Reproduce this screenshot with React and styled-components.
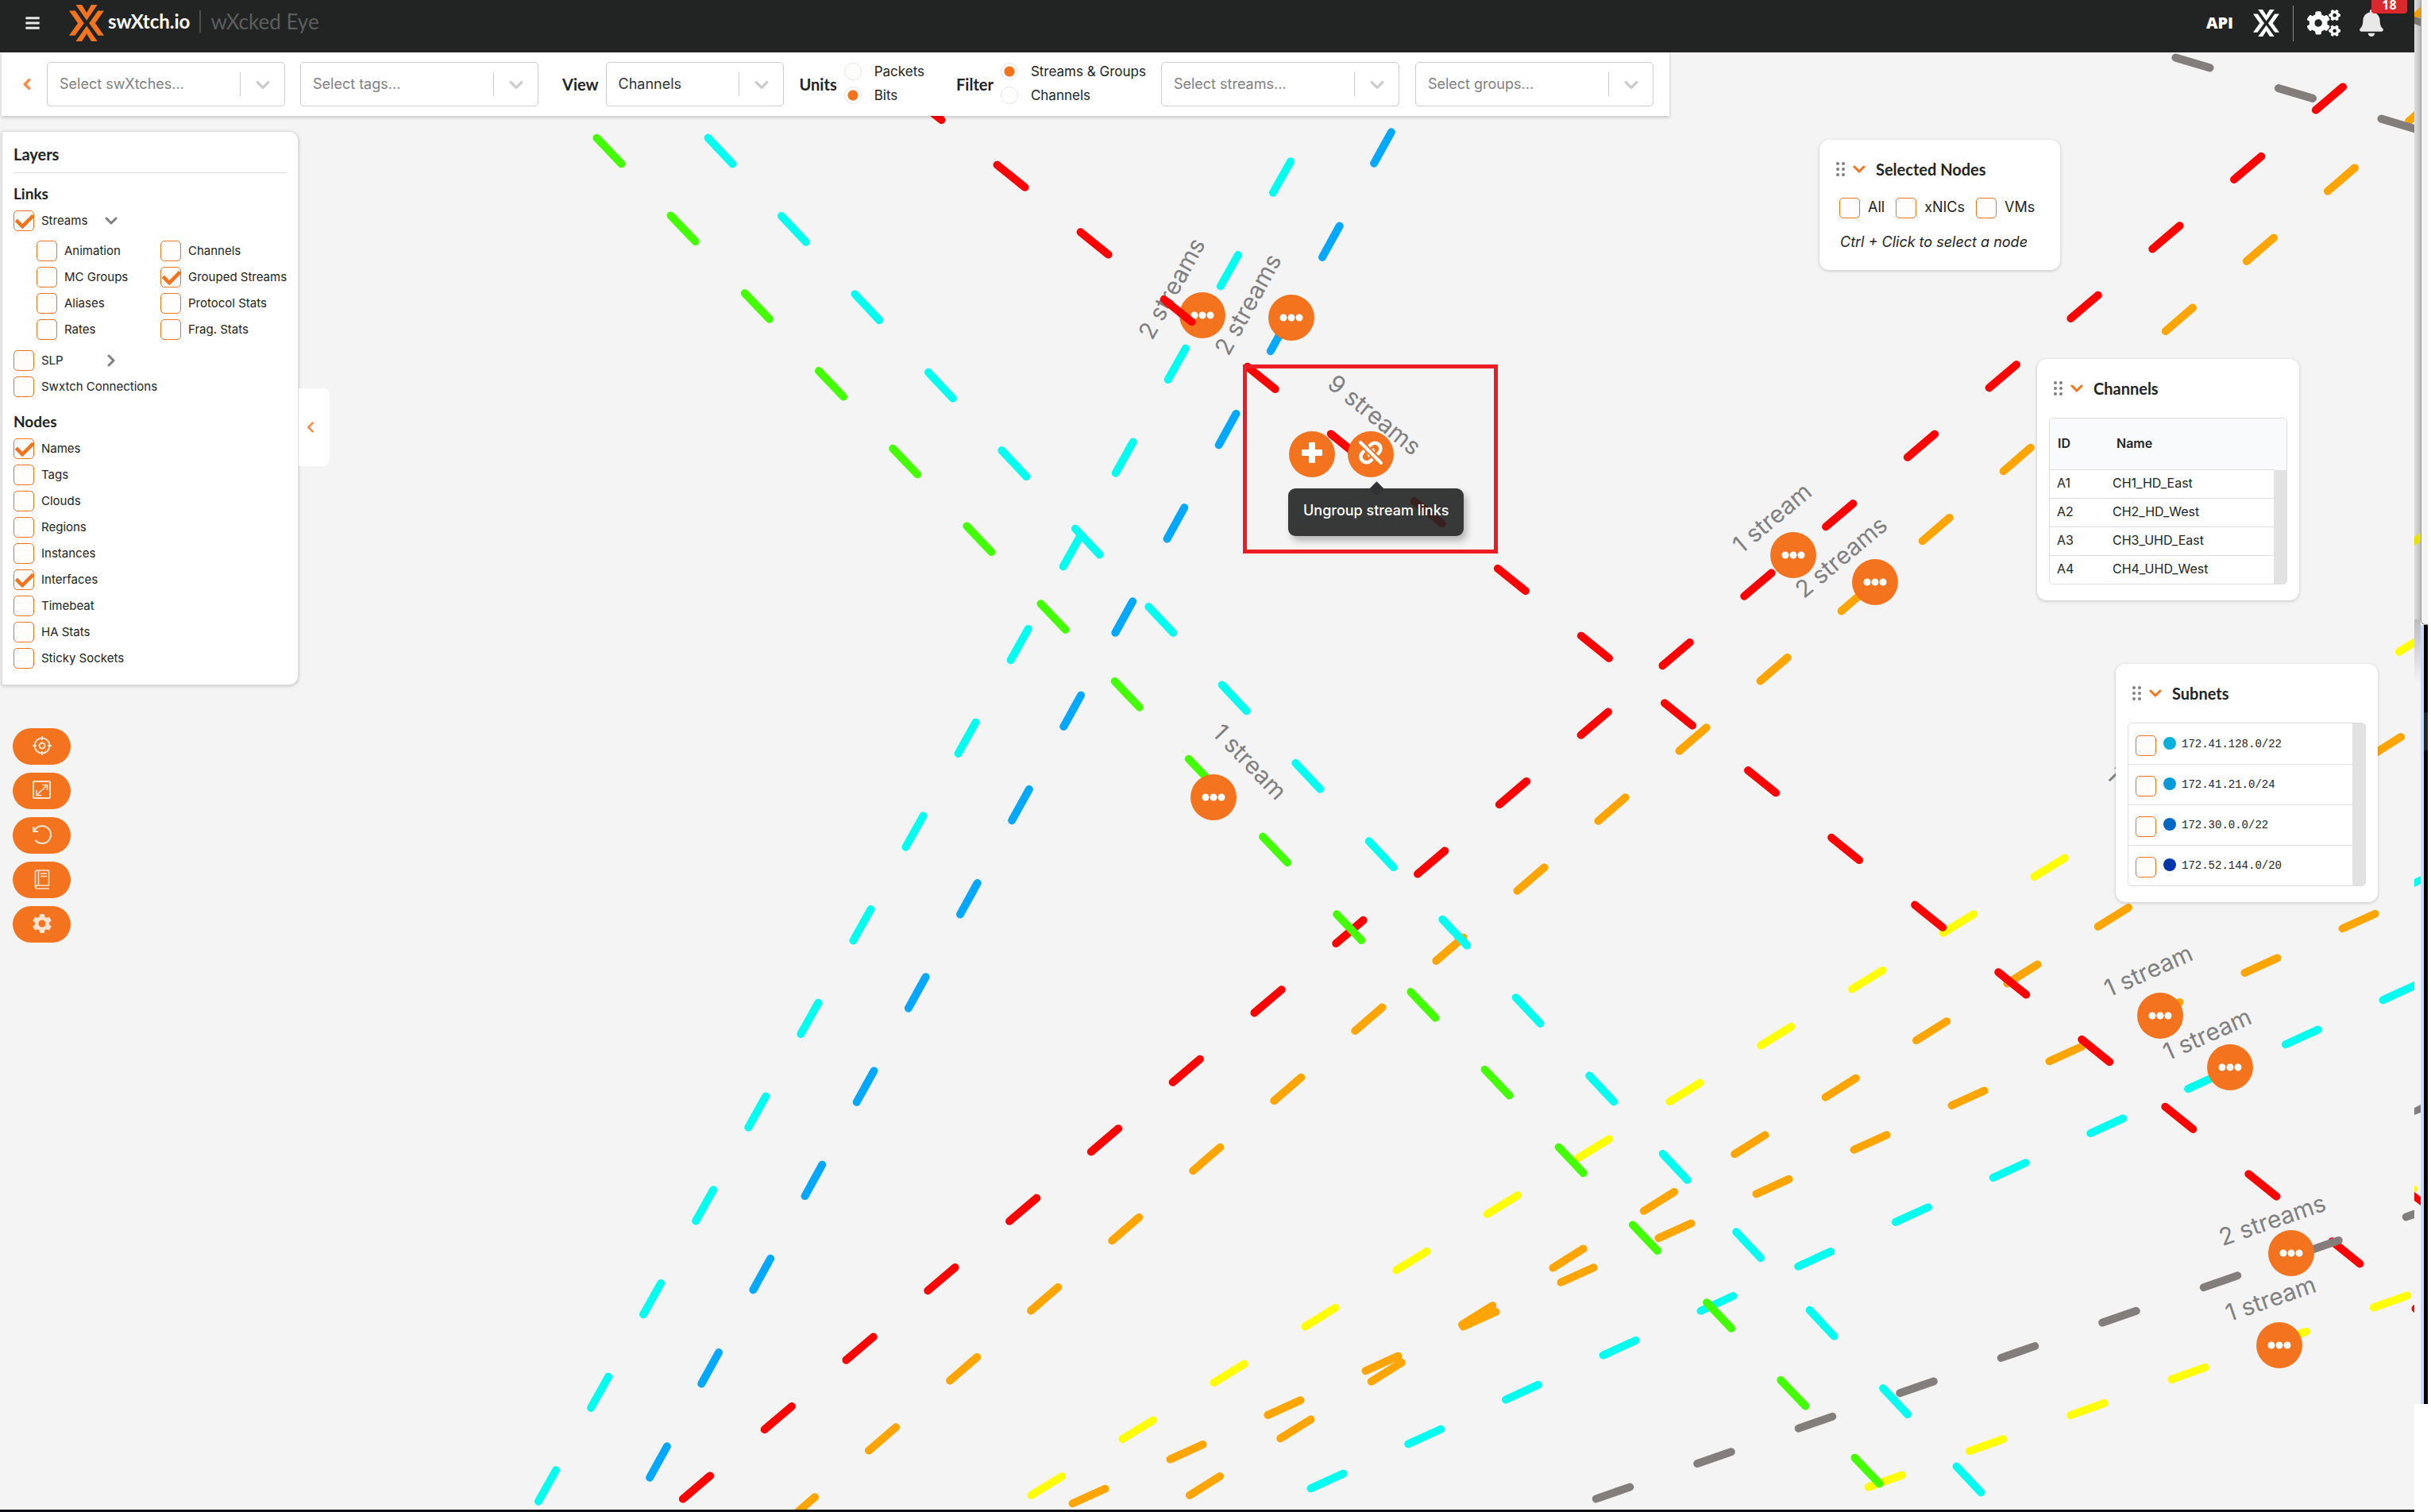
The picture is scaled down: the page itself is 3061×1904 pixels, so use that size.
import React from 'react';
import styled, { createGlobalStyle } from 'styled-components';
import { FaBars, FaBell, FaCogs } from 'react-icons/fa';
import { MdSettings } from 'react-icons/md';

const orange = '#f3731e';

const GlobalStyle = createGlobalStyle`
    * {
        box-sizing: border-box;
    }
    body {
        margin: 0;
        background: #fff;
        color: #222423;
        font-family: Inter, 'Liberation Sans', sans-serif;
        font-size: 15px;
    }
    button, select, input {
        font: inherit;
        color: inherit;
        margin: 0;
    }
    button {
        padding: 0;
        border: 0;
        background: none;
        cursor: pointer;
    }
    svg {
        display: block;
    }
`;

const Page = styled.div`
    display: grid;
    grid-template-columns: minmax(0, 1fr) 21px;
    min-height: 100vh;
`;

const Main = styled.div`
    display: flex;
    flex-direction: column;
    background: #f4f4f4;
    border-bottom: 3px solid #0b0d12;
`;

/* ---------- header ---------- */

const Header = styled.header`
    display: flex;
    align-items: center;
    height: 66px;
    padding: 0 9px 8px 31px;
    background: #222423;
    color: #fff;
    overflow: hidden;
`;

const MenuButton = styled.button`
    margin-right: 36px;
    color: #e8e8e8;
    font-size: 20px;
`;

const Brand = styled.a`
    display: flex;
    align-items: center;
    gap: 5px;
    color: #fff;
    font: 700 24px/30px Lato, sans-serif;
    text-decoration: none;

    span {
        padding-bottom: 4px;
    }
`;

const Product = styled.span`
    margin: 0 0 4px 12px;
    padding-left: 12px;
    border-left: 2px solid #4c4e4d;
    color: #5c5e5d;
    font: 400 26px/28px Lato, sans-serif;
`;

const HeaderTools = styled.nav`
    display: flex;
    align-items: center;
    margin-left: auto;
`;

const ApiLink = styled.a`
    margin-right: 25px;
    color: #fff;
    font: 800 20px/26px 'Open Sans', sans-serif;
    text-decoration: none;
`;

const ToolDivider = styled.span`
    width: 1px;
    height: 45px;
    margin: 0 17px;
    background: #8a8b8b;
`;

const BellButton = styled.button`
    position: relative;
    margin: 0 28px 0 22px;
    color: #e8e8e8;
    font-size: 34px;
`;

const Badge = styled.span`
    position: absolute;
    left: 17px;
    bottom: 29px;
    width: 45px;
    padding-bottom: 5px;
    border-radius: 0 0 4px 4px;
    background: #da292c;
    color: #fff;
    font: 700 16px/12px 'Open Sans', sans-serif;
    text-align: center;
`;

/* ---------- filter bar ---------- */

const Stage = styled.main`
    position: relative;
    flex: 1;
    overflow: hidden;
`;

const FilterBar = styled.form`
    position: relative;
    z-index: 4;
    display: flex;
    align-items: center;
    width: max-content;
    height: 80px;
    margin-left: 2px;
    padding: 0 20px 0 25px;
    background: #fff;
    box-shadow: 0 2px 4px rgba(0, 0, 0, 0.2);
`;

const BarLabel = styled.label`
    margin: 0 9px 0 ${props => props.$gap || 20}px;
    font: 700 20px/26px Lato, sans-serif;
`;

const SelectBox = styled.div`
    position: relative;
    display: flex;
    width: ${props => props.$width || 300}px;
    height: 56px;
    margin-left: ${props => props.$gap || 0}px;
    border: 1px solid #ccc;
    border-radius: 5px;
    color: ${props => (props.$filled ? '#333' : '#808080')};

    select {
        flex: 1;
        padding: 0 56px 2px 15px;
        border: 0;
        background: none;
        font-size: 18px;
        appearance: none;
    }
    span {
        position: absolute;
        top: 12px;
        right: 55px;
        width: 1px;
        height: 30px;
        background: #ccc;
    }
    svg {
        position: absolute;
        top: 19px;
        right: 18px;
        pointer-events: none;
    }
`;

const RadioGroup = styled.div`
    display: grid;
    gap: 8px;
    margin-right: ${props => props.$after || 0}px;
    padding-bottom: 2px;
    font-size: 17px;
    line-height: 22px;

    label {
        display: flex;
        gap: 16px;
    }
`;

const Radio = styled.input.attrs({ type: 'radio' })`
    width: 22px;
    height: 22px;
    border: 1px solid #e6e6e6;
    border-radius: 50%;
    background: #fffefd;
    appearance: none;

    &:checked {
        background: radial-gradient(circle, ${orange} 6px, #fffefd 7px);
    }
`;

/* ---------- layers ---------- */

const SideRow = styled.div`
    position: relative;
    z-index: 3;
    display: flex;
    align-items: center;
    width: max-content;
    margin: 19px 0 54px 2px;
`;

const Panel = styled.section`
    border-radius: 12px;
    background: #fff;
    box-shadow: 0 1px 4px rgba(0, 0, 0, 0.2);
`;

const LayersPanel = styled(Panel)`
    width: 374px;
    padding: 13px 14px 20px;
    border: 1px solid #ddd;
    border-radius: 0 12px 12px 0;
`;

const Title = styled.h2`
    margin: 0;
    font: 700 20px/30px Lato, sans-serif;
`;

const LayersTitle = styled(Title)`
    padding-bottom: 8px;
    border-bottom: 1px solid #ddd;
`;

const GroupTitle = styled(Title)`
    margin: ${props => props.$top}px 0 6px;
    font-size: 19px;
`;

const CheckList = styled.div`
    display: grid;
    gap: 7px;
    justify-items: start;
`;

const SubGrid = styled.div`
    display: grid;
    grid-template-columns: 156px max-content;
    gap: 7px 0;
    margin: 5px 0 6px 29px;
`;

const CheckRow = styled.div`
    display: flex;
    align-items: center;
    height: 26px;

    label {
        display: flex;
        align-items: center;
        gap: 9px;
        line-height: 22px;
    }
    button {
        width: 16px;
        margin-left: ${props => props.$gap || 0}px;
    }
`;

const CheckBox = styled.input.attrs({ type: 'checkbox' })`
    display: grid;
    place-items: center;
    width: 26px;
    height: 26px;
    border: 1px solid ${orange};
    border-radius: 5px;
    background: #fffdfc;
    appearance: none;

    &:checked::after {
        content: '';
        width: 17px;
        height: 9px;
        margin: -4px 0 0 1px;
        border-left: 5px solid ${orange};
        border-bottom: 5px solid ${orange};
        border-radius: 2px;
        transform: rotate(-45deg);
    }
`;

const CollapseTab = styled.button`
    display: grid;
    place-items: center;
    width: 39px;
    height: 98px;
    padding-right: 9px;
    border-radius: 0 8px 8px 0;
    background: #fff;
    margin-top: 48px;
`;

const ActionList = styled.div`
    position: relative;
    z-index: 3;
    display: grid;
    gap: 10px;
    width: max-content;
    margin-left: 16px;
`;

const ActionButton = styled.button`
    display: grid;
    place-items: center;
    width: 73px;
    height: 46px;
    padding-bottom: 2px;
    border-radius: 23px;
    background: ${orange};
    color: #fde3d0;
`;

/* ---------- canvas ---------- */

const Layer = styled.svg`
    position: absolute;
    inset: 0;
    width: 100%;
    height: 100%;
    pointer-events: none;

    line {
        stroke-width: 10px;
        stroke-linecap: round;
    }
    text {
        fill: #808080;
        font-size: 30px;
        text-anchor: middle;
        dominant-baseline: central;
    }
`;

const NodeButton = styled.button`
    position: absolute;
    left: ${props => props.$x - 29}px;
    top: ${props => props.$y - 95}px;
    display: grid;
    place-items: center;
    width: 58px;
    height: 58px;
    border-radius: 50%;
    background: ${orange};
    color: #fff;
`;

const Highlight = styled.div`
    position: absolute;
    left: 1565px;
    top: 393px;
    width: 321px;
    height: 238px;
    border: 5px solid #ed1c24;
`;

const Tooltip = styled.div`
    position: absolute;
    left: 1622px;
    top: 549px;
    padding: 0 19px 4px;
    border-radius: 9px;
    background: rgba(34, 36, 35, 0.9);
    box-shadow: 4px 6px 8px rgba(0, 0, 0, 0.25);
    color: #fff;
    font-size: 18px;
    font-weight: 500;
    line-height: 56px;

    &::before {
        content: '';
        position: absolute;
        top: -6px;
        left: 105px;
        width: 13px;
        height: 13px;
        background: #303233;
        transform: rotate(45deg);
    }
`;

/* ---------- floating panels ---------- */

const FloatPanel = styled(Panel)`
    position: absolute;
    z-index: 3;
    top: ${props => props.$top}px;
    right: ${props => props.$right}px;
    width: ${props => props.$width}px;
    padding: 22px 15px 20px;
`;

const PanelHead = styled.div`
    display: flex;
    align-items: center;
    padding-left: 6px;

    button {
        margin: 0 13px 0 9px;
    }
`;

const NodePicker = styled.div`
    display: flex;
    gap: 14px;
    margin: 21px 0 15px 10px;
    font-size: 18px;

    label {
        display: flex;
        gap: 10px;
        line-height: 24px;
    }
`;

const Hint = styled.p`
    margin: 0 0 0 11px;
    font-size: 18px;
    font-style: italic;
    line-height: 30px;
`;

const Frame = styled.div`
    margin-top: 22px;
    border: 1px solid #ddd;
    border-radius: 5px;
    overflow: hidden;
`;

const Scroll = styled.div`
    border-right: 16px solid #e2e2e2;
`;

const ChannelTable = styled.table`
    width: 100%;
    border-collapse: collapse;
    font-size: 16px;
    text-align: left;

    th {
        height: 64px;
        padding: 0 10px 2px;
        background: #f9fafc;
        font-weight: 600;
    }
    th + th {
        padding-left: 14px;
    }
    td {
        height: 36px;
        padding: 0 9px 3px;
        border-top: 1px solid #ddd;
    }
    tr > :first-child {
        width: 70px;
    }
    tr > :last-child {
        border-right: 16px solid #e2e2e2;
    }
    thead tr > :last-child {
        border-right-color: #f9fafc;
    }
`;

const SubnetRow = styled.label`
    display: flex;
    align-items: center;
    height: 51px;
    padding: 0 9px;
    font: 14px/20px 'Liberation Mono', monospace;

    & + & {
        border-top: 1px solid #ddd;
    }
    input {
        margin-top: 4px;
    }
`;

const Dot = styled.i`
    width: 16px;
    height: 16px;
    margin: 0 7px 2px 9px;
    border-radius: 50%;
    background: ${props => props.$color};
`;

/* ---------- window edge ---------- */

const Edge = styled.aside`
    display: grid;
    grid-template-rows: 787px 981px 1fr;
    grid-template-columns: 8px 9px;
    overflow: hidden;
`;

const EdgeCanvas = styled.svg`
    grid-row: 1 / span 2;
    width: 8px;
    height: 1768px;
    background: #f4f4f4;
`;

const EdgeWindow = styled.div`
    border-left: 1px solid #999;
    border-bottom: 1px solid #999;
    border-radius: 0 0 0 6px;
    background: #f4f4f4;
`;

const EdgeDark = styled.div`
    border-left: 4px solid #c6dcff;
    background: linear-gradient(#000 110px, #222 110px, #222 158px, #000 158px);
`;

const Chevron = ({ dir = 'down', size = 16, color = '#ccc', width = 3 }) => {
    let points = {
        down: '2,5 8,11 14,5',
        left: '11,2 5,8 11,14',
        right: '5,2 11,8 5,14'
    };
    return (
        <svg width={size} height={size} viewBox='0 0 16 16'>
            <polyline
                points={points[dir]}
                fill='none'
                stroke={color}
                strokeWidth={width}
                strokeLinecap='round'
                strokeLinejoin='round'
            />
        </svg>
    );
};

const Logo = ({ color, width, height }) => (
    <svg width={width} height={height} viewBox='262 18 131 135' preserveAspectRatio='none' fill={color}>
        <polygon points='287,18 310,18 328,47 345,18 368,18 328,76' />
        <polygon points='262,40 285,40 318,86 284,132 262,132 295,86' />
        <polygon points='393,40 370,40 337,86 371,132 393,132 360,86' />
        <polygon points='328,96 368,153 345,153 328,125 310,153 287,153' />
    </svg>
);

const Grip = () => (
    <svg width='12' height='18' fill='#808080'>
        {[2, 9, 16].map(y => (
            <g key={y}>
                <circle cx='2' cy={y} r='2' />
                <circle cx='9' cy={y} r='2' />
            </g>
        ))}
    </svg>
);

const DotsIcon = () => (
    <svg width='30' height='10' fill='currentColor'>
        <circle cx='5' cy='5' r='4.5' />
        <circle cx='15' cy='5' r='4.5' />
        <circle cx='25' cy='5' r='4.5' />
    </svg>
);

const PlusIcon = () => (
    <svg width='26' height='30' fill='currentColor'>
        <rect x='9' y='0' width='8' height='26' rx='1' />
        <rect x='0' y='9' width='26' height='8' rx='1' />
    </svg>
);

const UnlinkIcon = () => (
    <svg width='32' height='36' fill='none' stroke='currentColor' strokeLinecap='round'>
        <path d='M12 10l4-4a7.2 7.2 0 0 1 10.5 10l-3.5 3.5' strokeWidth='4.5' />
        <path d='M20 22l-4 4a7.2 7.2 0 0 1-10.5-10l3.5-3.5' strokeWidth='4.5' />
        <path d='M13 18l6-6M13.5 20l6.5-6' strokeWidth='3' />
        <path d='M2 2l28 28' stroke={orange} strokeWidth='8' />
        <path d='M3 3l26 26' strokeWidth='4' />
    </svg>
);

const TargetIcon = () => (
    <svg width='24' height='24' fill='none' stroke='currentColor' strokeWidth='2'>
        <circle cx='12' cy='12' r='9.5' />
        <circle cx='12' cy='12' r='3.5' />
        <path d='M12 0v5M12 19v5M0 12h5M19 12h5' />
    </svg>
);

const ExpandIcon = () => (
    <svg width='24' height='24' fill='none' stroke='currentColor' strokeWidth='2'>
        <rect x='1' y='1' width='21' height='21' rx='1' />
        <path d='M12 5.5h6.5v6.5M18 6l-6 6M5 12v6.5h6.5M5.5 18l6-6' strokeWidth='1.7' />
    </svg>
);

const UndoIcon = () => (
    <svg width='24' height='24' fill='none' stroke='currentColor' strokeWidth='2.2'>
        <path d='M1.2 2v6H7M2 7.5A11 11 0 1 1 3.5 19' />
    </svg>
);

const BookIcon = () => (
    <svg width='20' height='25' fill='none' stroke='currentColor' strokeWidth='1.6'>
        <path d='M19 24H4a2.5 2.5 0 0 1-2.5-2.5V3A2 2 0 0 1 3.5 1H18.5v19H4a2 2 0 0 0-2 2M5.5 1v19M8 5h8M8 8.5h8' />
    </svg>
);

// x and y of the first and the last dash centre, then how many dashes
const lines = [
    { color: '#ff0000', from: [2933, 124], to: [877, 1873], count: 21 },
    { color: '#ffff00', from: [3040, 809], to: [1318, 1871], count: 16 },
    { color: '#ffff00', from: [3010, 1639], to: [2374, 1865], count: 6 },
    { color: '#ffa500', from: [3050, 138], to: [1009, 1900], count: 21 },
    { color: '#837e7c', from: [2761, 79], to: [3020, 156], count: 3 },
    { color: '#ffa500', from: [3004, 940], to: [1517, 1871], count: 14 },
    { color: '#ffa500', from: [2970, 1160], to: [1371, 1884], count: 14 },
    { color: '#00ffee', from: [3021, 1250], to: [1671, 1865], count: 12 },
    { color: '#00ffee', from: [907, 190], to: [2479, 1863], count: 18 },
    { color: '#44ff00', from: [767, 190], to: [2351, 1852], count: 18 },
    { color: '#00ffee', from: [1614, 223], to: [689, 1871], count: 15 },
    { color: '#00a8ff', from: [1741, 186], to: [829, 1841], count: 15 }
];

const topLines = [
    { color: '#ff0000', from: [1168, 137], to: [3059, 1662], count: 19 },
    { color: '#837e7c', from: [3051, 1525], to: [2031, 1880], count: 9 }
];

const labels = [
    { text: '2 streams', x: 1475, y: 363, angle: -61 },
    { text: '2 streams', x: 1571, y: 383, angle: -61 },
    { text: '9 streams', x: 1731, y: 522, angle: 39 },
    { text: '1 stream', x: 1574, y: 959, angle: 46 },
    { text: '1 stream', x: 2231, y: 652, angle: -40 },
    { text: '2 streams', x: 2318, y: 701, angle: -40 },
    { text: '1 stream', x: 2699, y: 1012, angle: 46 },
    { text: '1 stream', x: 2705, y: 1222, angle: -24 },
    { text: '1 stream', x: 2779, y: 1302, angle: -24 },
    { text: '2 streams', x: 2861, y: 1536, angle: -19 },
    { text: '1 stream', x: 2859, y: 1635, angle: -19 }
];

const nodes = [
    [1626, 400],
    [1528, 1004],
    [2258, 699],
    [2361, 733],
    [2720, 1279],
    [2808, 1344],
    [2885, 1578],
    [2870, 1694]
];

const subLayers = [
    ['Animation', false],
    ['Channels', false],
    ['MC Groups', false],
    ['Grouped Streams', true],
    ['Aliases', false],
    ['Protocol Stats', false],
    ['Rates', false],
    ['Frag. Stats', false]
];

const nodeLayers = [
    ['Names', true],
    ['Tags', false],
    ['Clouds', false],
    ['Regions', false],
    ['Instances', false],
    ['Interfaces', true],
    ['Timebeat', false],
    ['HA Stats', false],
    ['Sticky Sockets', false]
];

const channels = [
    ['A1', 'CH1_HD_East'],
    ['A2', 'CH2_HD_West'],
    ['A3', 'CH3_UHD_East'],
    ['A4', 'CH4_UHD_West']
];

const subnets = [
    ['172.41.128.0/22', '#06b0dc'],
    ['172.41.21.0/24', '#059bdb'],
    ['172.30.0.0/22', '#0268c1'],
    ['172.52.144.0/20', '#0036a9']
];

const DashedLine = ({ color, from, to, count }) => {
    // push both ends out by half a dash
    let dx = to[0] - from[0];
    let dy = to[1] - from[1];
    let length = Math.hypot(dx, dy);
    let ux = (dx / length) * 22.5;
    let uy = (dy / length) * 22.5;
    let period = length / (count - 1);
    return (
        <line
            x1={from[0] - ux}
            y1={from[1] - uy}
            x2={to[0] + ux}
            y2={to[1] + uy}
            stroke={color}
            strokeDasharray={`45 ${period - 45}`}
        />
    );
};

const Select = ({ label, ...props }) => (
    <SelectBox {...props}>
        <select aria-label={label}>
            <option>{label}</option>
        </select>
        <span />
        <Chevron size={18} />
    </SelectBox>
);

const Check = ({ label, checked, gap, children }) => (
    <CheckRow $gap={gap}>
        <label>
            <CheckBox defaultChecked={checked} />
            {label}
        </label>
        {children}
    </CheckRow>
);

const PanelTitle = ({ children }) => (
    <PanelHead>
        <Grip />
        <button aria-label={`Collapse ${children}`}>
            <Chevron size={16} color={orange} />
        </button>
        <Title>{children}</Title>
    </PanelHead>
);

const TopHeader = () => (
    <Header>
        <MenuButton aria-label='Menu'>
            <FaBars />
        </MenuButton>
        <Brand href='#home'>
            <Logo color={orange} width={44} height={46} />
            <span>swXtch.io</span>
        </Brand>
        <Product>wXcked Eye</Product>
        <HeaderTools>
            <ApiLink href='#api'>API</ApiLink>
            <Logo color='#fff' width={33} height={34} />
            <ToolDivider />
            <FaCogs size={42} />
            <BellButton aria-label='Notifications'>
                <FaBell />
                <Badge>18</Badge>
            </BellButton>
        </HeaderTools>
    </Header>
);

const Filters = () => (
    <FilterBar>
        <button type='button' aria-label='Hide filters'>
            <Chevron dir='left' size={14} color='#f58d4b' width={4} />
        </button>
        <Select label='Select swXtches...' $gap={18} />
        <Select label='Select tags...' $gap={19} />
        <BarLabel $gap={30}>View</BarLabel>
        <Select label='Channels' $width={224} $filled />
        <BarLabel as='span'>Units</BarLabel>
        <RadioGroup $after={20}>
            <label>
                <Radio name='units' />
                Packets
            </label>
            <label>
                <Radio name='units' defaultChecked />
                Bits
            </label>
        </RadioGroup>
        <BarLabel as='span'>Filter</BarLabel>
        <RadioGroup $after={19}>
            <label>
                <Radio name='filter' defaultChecked />
                Streams &amp; Groups
            </label>
            <label>
                <Radio name='filter' />
                Channels
            </label>
        </RadioGroup>
        <Select label='Select streams...' />
        <Select label='Select groups...' $gap={20} />
    </FilterBar>
);

const Layers = () => (
    <SideRow>
        <LayersPanel>
            <LayersTitle>Layers</LayersTitle>
            <GroupTitle $top={11}>Links</GroupTitle>
            <CheckList>
                <Check label='Streams' checked gap={22}>
                    <button aria-label='Collapse streams'>
                        <Chevron color='#808080' />
                    </button>
                </Check>
                <SubGrid>
                    {subLayers.map(([name, checked]) => (
                        <Check key={name} label={name} checked={checked} />
                    ))}
                </SubGrid>
                <Check label='SLP' gap={52}>
                    <button aria-label='Expand SLP'>
                        <Chevron dir='right' color='#808080' />
                    </button>
                </Check>
                <Check label='Swxtch Connections' />
            </CheckList>
            <GroupTitle $top={16}>Nodes</GroupTitle>
            <CheckList>
                {nodeLayers.map(([name, checked]) => (
                    <Check key={name} label={name} checked={checked} />
                ))}
            </CheckList>
        </LayersPanel>
        <CollapseTab aria-label='Hide layers'>
            <Chevron dir='left' size={14} color='#f58d4b' />
        </CollapseTab>
    </SideRow>
);

const Canvas = () => (
    <React.Fragment>
        <Layer>
            <g transform='translate(0 -66)'>
                {lines.map((line, i) => (
                    <DashedLine key={i} {...line} />
                ))}
                {labels.map(({ text, x, y, angle }, i) => (
                    <text key={i} transform={`translate(${x} ${y}) rotate(${angle})`}>
                        {text}
                    </text>
                ))}
            </g>
        </Layer>
        <NodeButton $x={1514} $y={397} aria-label='Link options'>
            <DotsIcon />
        </NodeButton>
        <Layer>
            <g transform='translate(0 -66)'>
                {topLines.map((line, i) => (
                    <DashedLine key={i} {...line} />
                ))}
            </g>
        </Layer>
        {nodes.map(([x, y]) => (
            <NodeButton key={x} $x={x} $y={y} aria-label='Link options'>
                <DotsIcon />
            </NodeButton>
        ))}
        <Highlight />
        <NodeButton $x={1652} $y={572} aria-label='Expand'>
            <PlusIcon />
        </NodeButton>
        <NodeButton $x={1726} $y={572} aria-label='Ungroup'>
            <UnlinkIcon />
        </NodeButton>
        <Tooltip role='tooltip'>Ungroup stream links</Tooltip>
    </React.Fragment>
);

const SelectedNodes = () => (
    <FloatPanel $top={110} $right={446} $width={303}>
        <PanelTitle>Selected Nodes</PanelTitle>
        <NodePicker>
            {['All', 'xNICs', 'VMs'].map(name => (
                <label key={name}>
                    <CheckBox />
                    {name}
                </label>
            ))}
        </NodePicker>
        <Hint>Ctrl + Click to select a node</Hint>
    </FloatPanel>
);

const Channels = () => (
    <FloatPanel $top={386} $right={145} $width={330}>
        <PanelTitle>Channels</PanelTitle>
        <Frame>
            <ChannelTable>
                <thead>
                    <tr>
                        <th>ID</th>
                        <th>Name</th>
                    </tr>
                </thead>
                <tbody>
                    {channels.map(([id, name]) => (
                        <tr key={id}>
                            <td>{id}</td>
                            <td>{name}</td>
                        </tr>
                    ))}
                </tbody>
            </ChannelTable>
        </Frame>
    </FloatPanel>
);

const Subnets = () => (
    <FloatPanel $top={770} $right={46} $width={330}>
        <PanelTitle>Subnets</PanelTitle>
        <Frame>
            <Scroll>
                {subnets.map(([name, color]) => (
                    <SubnetRow key={name}>
                        <CheckBox />
                        <Dot $color={color} />
                        {name}
                    </SubnetRow>
                ))}
            </Scroll>
        </Frame>
    </FloatPanel>
);

const WindowEdge = () => (
    <Edge>
        <EdgeCanvas>
            <defs>
                <linearGradient id='shade'>
                    <stop offset='0' stopColor='#dedede' />
                    <stop offset='1' stopColor='#bcbcbc' />
                </linearGradient>
                <linearGradient id='fade' x2='0' y2='1'>
                    <stop offset='0' stopColor='#bcbcbc' />
                    <stop offset='1' stopColor='#f4f4f4' />
                </linearGradient>
            </defs>
            <rect width='8' height='780' fill='url(#shade)' />
            <rect y='780' width='8' height='80' fill='url(#fade)' />
            <polygon points='0,16 8,8 8,22 0,22' fill='#f59e00' />
            <polygon points='0,21 8,23 8,33 0,30' fill='#7b7775' />
            <polygon points='0,676 8,671 8,682 0,687' fill='#e8e000' />
            <polygon points='0,1107 8,1103 8,1113 0,1117' fill='#00ffee' />
            <polygon points='0,1395 8,1391 8,1401 0,1404' fill='#837e7c' />
            <circle cx='0' cy='1497' r='4' fill='#ffff00' />
            <polygon points='0,1501 8,1507 8,1518 0,1512' fill='#ff0000' />
        </EdgeCanvas>
        <EdgeWindow />
        <EdgeDark />
    </Edge>
);

const App = () => (
    <Page>
        <GlobalStyle />
        <Main>
            <TopHeader />
            <Stage>
                <Canvas />
                <Filters />
                <Layers />
                <ActionList>
                    <ActionButton aria-label='Center'>
                        <TargetIcon />
                    </ActionButton>
                    <ActionButton aria-label='Fit'>
                        <ExpandIcon />
                    </ActionButton>
                    <ActionButton aria-label='Reset'>
                        <UndoIcon />
                    </ActionButton>
                    <ActionButton aria-label='Legend'>
                        <BookIcon />
                    </ActionButton>
                    <ActionButton aria-label='Settings'>
                        <MdSettings size={30} />
                    </ActionButton>
                </ActionList>
                <SelectedNodes />
                <Channels />
                <Subnets />
            </Stage>
        </Main>
        <WindowEdge />
    </Page>
);

export default App;
